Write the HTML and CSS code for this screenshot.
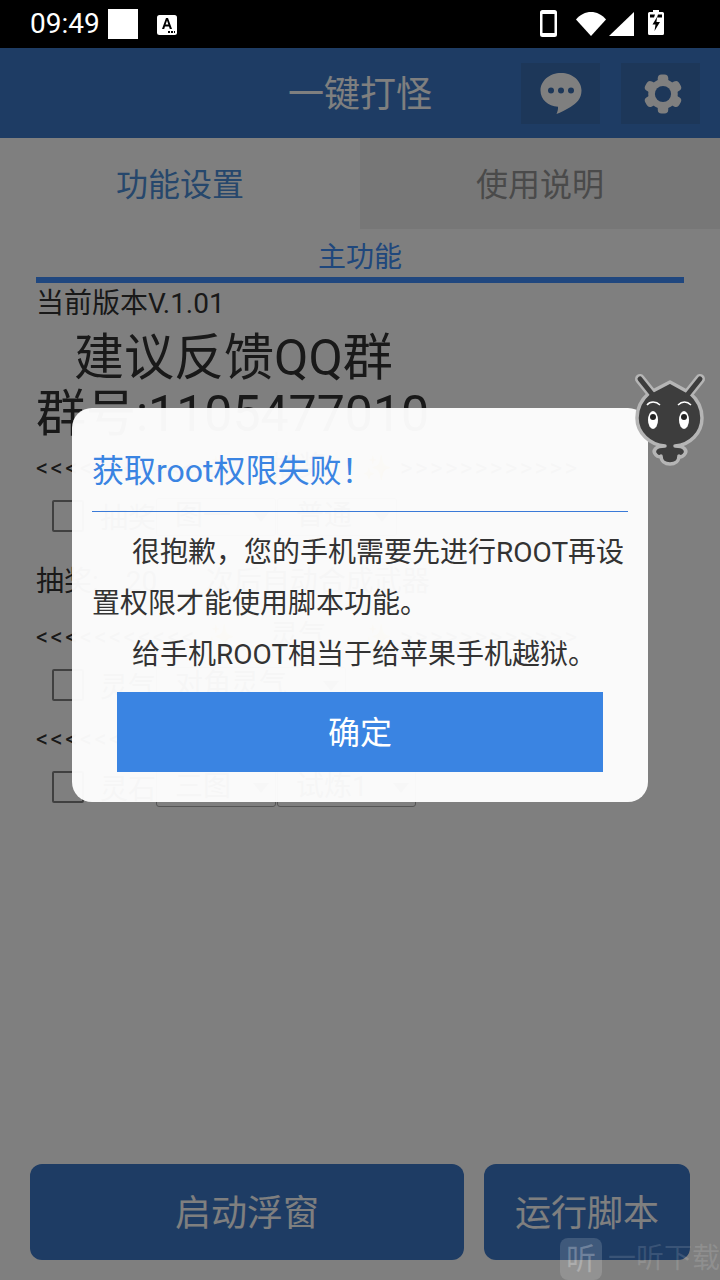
FILE: index.html
```html
<!DOCTYPE html>
<html lang="zh">
<head>
<meta charset="utf-8">
<title>一键打怪</title>
<link rel="stylesheet" href="styles.css">
</head>
<body>
<div class="app">
  <div class="status">
    <span class="time">09:49</span>
    <span class="blank"></span>
    <svg class="ic-a" width="20" height="20" viewBox="0 0 20 20"><rect width="20" height="20" rx="2.500" fill="#fff"/><path d="M5 14 9 3h2l4 11h-2.200l-.8-2.500H8L7.200 14zM8.600 9.500h2.800L10 5.500z" fill="#000"/><path d="M11 16h2v2h-2zM14 16h2v2h-2zM17 16h1v2h-1z" fill="#000"/></svg>
    <span class="spacer"></span>
    <svg class="ic-phone" width="17" height="27" viewBox="0 0 17 27"><path fill-rule="evenodd" d="M2.500 0h12A2.500 2.500 0 0 1 17 2.500v22a2.500 2.500 0 0 1-2.500 2.500h-12A2.500 2.500 0 0 1 0 24.500v-22A2.500 2.500 0 0 1 2.500 0zM2.500 4v19h12V4z" fill="#fff"/></svg>
    <svg class="ic-wifi" width="30" height="24" viewBox="0 0 30 24"><path d="M0 7.500C8-2.500 22-2.500 30 7.500L15 24z" fill="#fff"/></svg>
    <svg class="ic-signal" width="25" height="24" viewBox="0 0 25 24"><path d="M25 0v24H0z" fill="#fff"/></svg>
    <svg class="ic-batt" width="16" height="25" viewBox="0 0 16 25"><path fill-rule="evenodd" d="M5 0h6v2h3.500A1.500 1.500 0 0 1 16 3.500v20a1.500 1.500 0 0 1-1.500 1.500h-13A1.500 1.500 0 0 1 0 23.500v-20A1.500 1.500 0 0 1 1.500 2H5zM2 4.500v3h4l1-3zM10 4.500l-1 3h5v-3zM9 7 4.500 14.500h3L6.500 21 12 12H8.500z" fill="#fff"/></svg>
  </div>

  <header class="bar">
    <h1 class="bar-title">一键打怪</h1>
    <div class="bar-btns">
      <button class="bar-btn">
        <svg width="42" height="44" viewBox="0 0 42 44"><path d="M21 1C32.300 1 41.500 8.800 41.500 18.500c0 8-5 13-11 16.500-4.500 2.700-10 5.500-14 7 1-2 1.700-4.500 1.500-7.200C8 34 .5 27.500.5 18.500.5 8.800 9.700 1 21 1z" fill="#fff"/><circle cx="11" cy="18.500" r="3" fill="#3a6eb2"/><circle cx="21" cy="18.500" r="3" fill="#3a6eb2"/><circle cx="31" cy="18.500" r="3" fill="#3a6eb2"/></svg>
      </button>
      <button class="bar-btn">
        <svg class="gear" width="40" height="40" viewBox="0 0 42 42"><g fill="#fff"><rect x="15.500" y="0.500" width="11" height="41" rx="4"/><rect x="15.500" y="0.500" width="11" height="41" rx="4" transform="rotate(60 21 21)"/><rect x="15.500" y="0.500" width="11" height="41" rx="4" transform="rotate(120 21 21)"/></g><circle cx="21" cy="21" r="12" fill="none" stroke="#fff" stroke-width="7"/><circle cx="21" cy="21" r="8.500" fill="#3a6eb2"/></svg>
      </button>
    </div>
  </header>

  <nav class="tabs">
    <div class="tab tab-on">功能设置</div>
    <div class="tab tab-off">使用说明</div>
  </nav>

  <main class="content">
    <div class="sec-title">主功能</div>
    <div class="sec-line"></div>
    <p class="ver">当前版本V.1.01</p>
    <p class="big big-indent">建议反馈QQ群</p>
    <p class="big big-next">群号:1105477010</p>

    <p class="divider">&lt;&lt;&lt;&lt;&lt;&lt;&lt;&lt;&lt;&lt;&lt; <span class="star">✨</span> <span class="div-name">抽奖</span> <span class="star">✨</span> &gt;&gt;&gt;&gt;&gt;&gt;&gt;&gt;&gt;&gt;&gt;&gt;</p>
    <div class="row">
      <span class="check"></span><span class="label">抽奖</span>
      <span class="select s-120">图一<i class="arrow"></i></span>
      <span class="select s-120">普通<i class="arrow"></i></span>
    </div>
    <div class="count">抽奖:<span class="count-num">20</span>次后自动合成武器</div>

    <p class="divider">&lt;&lt;&lt;&lt;&lt;&lt;&lt;&lt;&lt;&lt;&lt; <span class="star">✨</span> <span class="div-name">灵气</span> <span class="star">✨</span> &gt;&gt;&gt;&gt;&gt;&gt;&gt;&gt;&gt;&gt;&gt;&gt;</p>
    <div class="row">
      <span class="check"></span><span class="label">灵气</span>
      <span class="select s-190">对角灵气<i class="arrow"></i></span>
    </div>

    <p class="divider">&lt;&lt;&lt;&lt;&lt;&lt;&lt;&lt;&lt;&lt;&lt; <span class="star">✨</span> <span class="div-name">灵石</span> <span class="star">✨</span> &gt;&gt;&gt;&gt;&gt;&gt;&gt;&gt;&gt;&gt;&gt;&gt;</p>
    <div class="row">
      <span class="check"></span><span class="label">灵石</span>
      <span class="select s-120">三图<i class="arrow"></i></span>
      <span class="select s-138">试炼1<i class="arrow"></i></span>
    </div>
  </main>

  <footer class="actions">
    <button class="act act-wide">启动浮窗</button>
    <button class="act act-narrow">运行脚本</button>
  </footer>

  <div class="scrim">
    <section class="dialog">
      <h2 class="dlg-title">获取root权限失败！</h2>
      <div class="dlg-rule"></div>
      <p class="dlg-text">很抱歉，您的手机需要先进行ROOT再设置权限才能使用脚本功能。</p>
      <p class="dlg-text">给手机ROOT相当于给苹果手机越狱。</p>
      <button class="dlg-btn">确定</button>
    </section>
  </div>

  <svg class="mascot" width="100" height="110" viewBox="0 0 100 110">
    <g stroke="#b5b5b5" stroke-width="10" stroke-linecap="round" fill="none">
      <path d="M20 14 36 34M80 14 64 34"/>
    </g>
    <path d="M50 17 70 28C78 35 82 44 82 53 82 68 70 80 55 81 65 81 68 86 64 90 62 92 60 92 59 91 59 96 55 99 50 99 45 99 41 96 41 91 40 92 38 92 36 90 32 86 35 81 45 81 30 80 17 68 17 53 17 44 21 35 29 28z" fill="#3d3d3d" stroke="#b5b5b5" stroke-width="3.500" stroke-linejoin="round"/>
    <g stroke="#3d3d3d" stroke-width="5" stroke-linecap="round" fill="none">
      <path d="M20 14 36 34M80 14 64 34"/>
    </g>
    <path d="M27 40C30 36 36 36 40 40M58 40C62 36 67 36 71 40" stroke="#fff" stroke-width="1.500" fill="none"/>
    <ellipse cx="33" cy="55" rx="5" ry="9" fill="#fff"/>
    <ellipse cx="64" cy="55" rx="5" ry="9" fill="#fff"/>
    <circle cx="33" cy="52" r="3" fill="#222"/>
    <circle cx="64" cy="52" r="3" fill="#222"/>
  </svg>

  <div class="mark">
    <span class="mark-box">听</span>
    <span class="mark-text">一听下载</span>
  </div>
</div>
</body>
</html>
```

FILE: styles.css
```css
* { box-sizing: border-box; }
html, body { margin: 0; padding: 0; }
body { font-family: Roboto, "Noto Sans CJK SC", sans-serif; background: #fff; }
p, h1, h2 { margin: 0; font-weight: 400; }
button { border: 0; padding: 0; font: inherit; }

.app { position: relative; width: 720px; height: 1280px; overflow: hidden; display: flex; flex-direction: column; }

.status { height: 48px; flex: none; background: #000; color: #fff; display: flex; align-items: center; padding-left: 30px; }
.time { font-size: 28px; line-height: 48px; width: 78px; }
.blank { width: 30px; height: 30px; background: #fff; }
.ic-a { margin-left: 19px; margin-top: 2px; }
.spacer { flex: 1; }
.ic-phone { margin-right: 19px; margin-top: -1px; }
.ic-wifi { margin-right: 3px; }
.ic-signal { margin-right: 14px; }
.ic-batt { margin-right: 56px; margin-top: -3px; }

.bar { height: 90px; flex: none; background: #3c78c8; display: flex; align-items: center; justify-content: center; position: relative; padding-top: 4px; }
.bar-title { font-size: 36px; color: #fff; line-height: 86px; }
.bar-btns { position: absolute; right: 20px; top: 15px; display: flex; gap: 21px; }
.bar-btn { width: 79px; height: 61px; background: #3a6eb2; display: flex; align-items: center; justify-content: center; }
.gear { margin-left: 4px; }

.tabs { height: 91px; flex: none; display: flex; }
.tab { flex: 1; font-size: 32px; display: flex; align-items: center; justify-content: center; padding-bottom: 4px; }
.tab-on { background: #fff; color: #4c8ed8; }
.tab-off { background: #eee; color: #949494; }

.content { padding: 0 36px; color: #333; }
.sec-title { height: 48px; line-height: 57px; font-size: 28px; text-align: center; color: #3f8ef8; }
.sec-line { height: 6px; background: #408eff; }
.ver { font-size: 28px; line-height: 42px; margin-bottom: 5px; }
.big { font-size: 50px; line-height: 57px; }
.big-indent { padding-left: 38px; }
.big-next { line-height: 55px; }
.divider { font-size: 24px; line-height: 49px; height: 49px; white-space: nowrap; letter-spacing: 2.400px; }
.div-name { font-size: 28px; letter-spacing: 0; margin: 0 27px; }
.star { color: #ffd83c; letter-spacing: 0; }
.row { height: 50px; display: flex; align-items: center; margin-bottom: 3px; padding-left: 16px; font-size: 28px; }
.check { width: 32px; height: 32px; border: 2px solid #808080; border-radius: 2px; flex: none; }
.label { width: 72px; padding-left: 16px; flex: none; }
.select { height: 38px; margin-top: 2px; border: 1px solid #aaa; border-radius: 3px; padding-left: 18px; position: relative; line-height: 34px; flex: none; margin-right: 1px; white-space: nowrap; }
.s-120 { width: 120px; }
.s-138 { width: 139px; }
.s-190 { width: 190px; }
.arrow { position: absolute; right: 6px; top: 13px; width: 0; height: 0; border-left: 8px solid transparent; border-right: 8px solid transparent; border-top: 10px solid #777; }
.count { font-size: 28px; line-height: 50px; margin-top: 16px; display: flex; margin-bottom: 4px; }
.count-num { width: 107px; padding-left: 27px; }

.actions { margin-top: auto; padding: 0 30px 20px; display: flex; gap: 20px; }
.act { height: 96px; border-radius: 12px; background: #3c78c8; color: #fff; font-size: 36px; padding-bottom: 4px; }
.act-wide { width: 434px; }
.act-narrow { width: 206px; }

.scrim { position: absolute; left: 0; right: 0; top: 48px; bottom: 0; background: rgba(0,0,0,.5); padding: 360px 72px 0; }
.dialog { background: rgba(255,255,255,.96); border-radius: 20px; height: 394px; padding: 41px 20px 0; }
.dlg-title { font-size: 32px; line-height: 44px; color: #3a84e2; }
.dlg-rule { height: 1px; background: #3a7ad8; margin-top: 18px; }
.dlg-text { font-size: 28px; line-height: 51px; color: #333; text-indent: 40px; }
.dlg-rule + .dlg-text { margin-top: 15px; }
.dlg-btn { display: block; width: 486px; height: 80px; margin: 12px 0 0 25px; background: #3a84e2; color: #fff; font-size: 32px; padding-bottom: 4px; }

.mascot { position: absolute; left: 620px; top: 365px; }

.mark { position: absolute; left: 560px; top: 1238px; height: 42px; display: flex; gap: 6px; align-items: center; white-space: nowrap; }
.mark-box { width: 42px; height: 42px; border-radius: 8px; background: rgba(255,255,255,.15); color: rgba(255,255,255,.25); font-size: 30px; text-align: center; line-height: 42px; }
.mark-text { font-size: 28px; line-height: 42px; color: rgba(255,255,255,.13); }
```
